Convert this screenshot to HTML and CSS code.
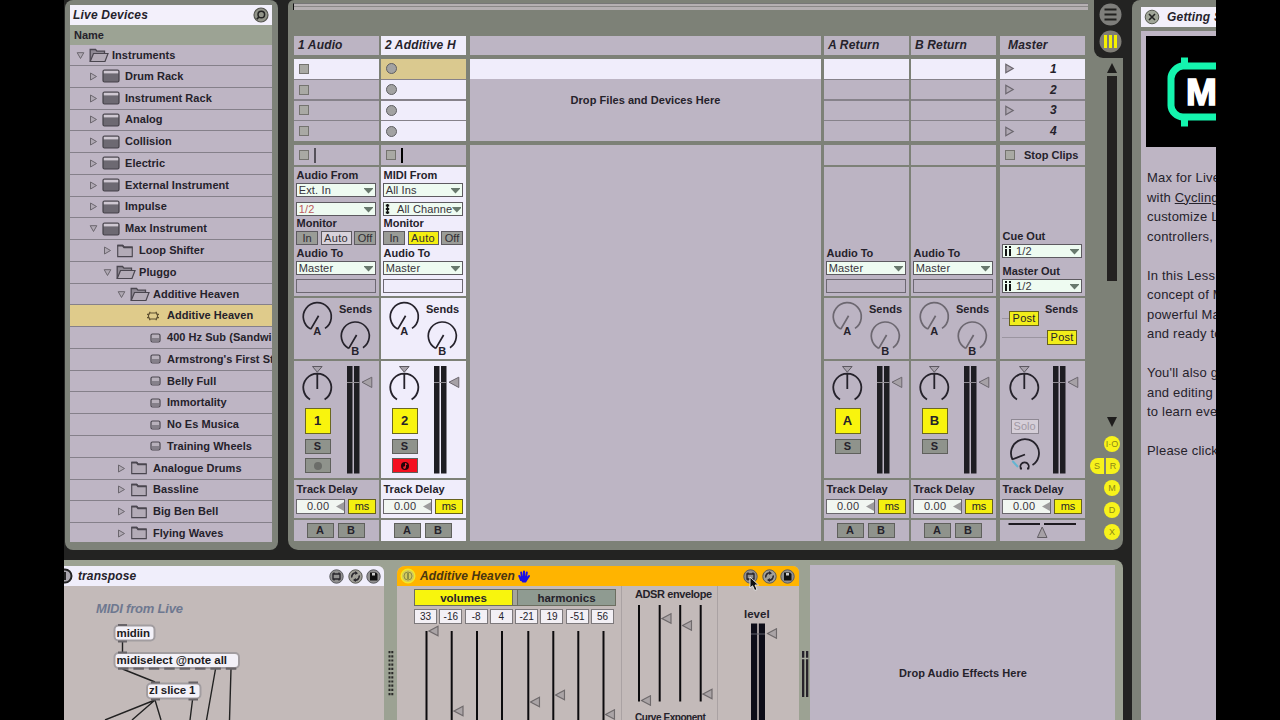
FILE: index.html
```html
<!DOCTYPE html>
<html lang="en">
<head>
<meta charset="utf-8">
<title>Live Set</title>
<link rel="stylesheet" href="styles.css">
</head>
<body>
<svg class="defs" width="0" height="0">
  <symbol id="right" viewBox="0 0 8 9"><path d="M1 1L7 4.5L1 8Z" fill="#b0a9b4" stroke="#6b666e"/></symbol>
  <symbol id="down" viewBox="0 0 9 8"><path d="M1.2 1.2H7.8L4.5 7Z" fill="#b0a9b4" stroke="#6b666e"/></symbol>
  <symbol id="folder" viewBox="0 0 18 15"><path d="M1.2 13.5V1.5H6.5L8 3.2H16.8V13.5Z" fill="#b3abb7" stroke="#4a464f" stroke-width="1.2"/><path d="M1 1.8H6.5L8 3.6H17" fill="none" stroke="#4a464f" stroke-width="1.8"/></symbol>
  <symbol id="open" viewBox="0 0 20 15"><path d="M1.2 13.5V1.5H6.5L8 3.2H15.5V5.5" fill="#8f8994" stroke="#4a464f" stroke-width="1.3"/><path d="M1.2 13.5L4.5 5.5H19L16 13.5Z" fill="#b3abb7" stroke="#4a464f" stroke-width="1.2"/></symbol>
  <symbol id="device" viewBox="0 0 18 14"><rect x="1" y="1" width="16" height="12" rx="1.5" fill="#6d6972" stroke="#444148" stroke-width="1.2"/><rect x="1.8" y="1.8" width="14.4" height="2.6" fill="#cfc8d2"/></symbol>
  <symbol id="preset" viewBox="0 0 11 10"><rect x="1" y="1" width="9" height="8" rx="1.5" fill="#b8b1bc" stroke="#4a464f" stroke-width="1.2"/><rect x="2" y="5" width="7" height="3" fill="#85808a"/></symbol>
  <symbol id="maxdev" viewBox="0 0 14 10"><path d="M3.500 2H10.500L11 3.300H13M13 6.700H11L10.500 8H3.500L3 6.700H1M1 3.300H3L3.500 2M2.500 3.300V6.700M11.500 3.300V6.700M3.800 .8V2M10.200 .8V2M3.800 8V9.200M10.200 8V9.200" fill="none" stroke="#5f5030" stroke-width="1.200"/></symbol>
  <symbol id="knobs" viewBox="0 0 85 61"><g fill="none" stroke="currentColor" stroke-width="1.700"><path d="M16.800 31.100A14 14 0 1 1 31 30.400M24.600 17.700L16.800 31.100"/><path d="M54.800 50.400A14 14 0 1 1 69 49.700M62.600 37L54.800 50.400"/></g></symbol>
  <symbol id="pan" viewBox="0 0 48 47"><path d="M18.500 5.500H28.100L23.300 11.200Z" fill="#a9a3ad" stroke="#5c5860"/><path d="M16 38.500A14 14 0 1 1 30.600 38.500M23.300 12.500V28" fill="none" stroke="#25222b" stroke-width="1.8"/></symbol>
  <symbol id="meter" viewBox="0 0 37 117"><path d="M5 5H10.500V112.500H5ZM12 5H17.500V112.500H12Z" fill="#1e1d22"/><path d="M5 21.500H17.500" stroke="#8e8a90"/><path d="M20 21.200L29.800 16.200V26.500Z" fill="#a6a1a6" stroke="#6b666e"/></symbol>
  <symbol id="fader" viewBox="0 0 11 12"><path d="M1 6L10 1.300V10.700Z" fill="#aaa4a6" stroke="#6f6a6c" stroke-width="1.200"/></symbol>
  <symbol id="tmax" viewBox="0 0 15 15"><circle cx="7.500" cy="7.500" r="6.700" fill="#929191" stroke="#5a5a60"/><path d="M4 5H11V10H4ZM5 3.500V5M10 3.500V5M5 10V11.500M10 10V11.500" fill="none" stroke="#29262d" stroke-width="1.400"/></symbol>
  <symbol id="tswap" viewBox="0 0 15 15"><circle cx="7.500" cy="7.500" r="6.700" fill="#a09f98" stroke="#5a5a55"/><path d="M3.800 8.500A4 4 0 0 1 8 3.800M11.200 6.500A4 4 0 0 1 7 11.200" fill="none" stroke="#29262d" stroke-width="1.600"/><path d="M7.200 2L10 4.300L7.200 6ZM7.800 9L5 10.900L7.800 13Z" fill="#29262d"/></symbol>
  <symbol id="tsave" viewBox="0 0 15 15"><circle cx="7.500" cy="7.500" r="6.700" fill="#929191" stroke="#5a5a60"/><path d="M4 3.500H10L11.500 5V11.500H4Z" fill="#111"/><rect x="6" y="4" width="3" height="2.500" fill="#ccc"/></symbol>
</svg>
<div class="stage">
  <div class="upper">
    <aside class="browser">
      <div class="btitle"><span>Live Devices</span><svg width="16" height="16" viewBox="0 0 16 16"><circle cx="8" cy="8" r="7" fill="#929489" stroke="#55554f" stroke-width="1.200"/><circle cx="8.300" cy="7.500" r="3.300" fill="none" stroke="#222" stroke-width="1.500"/><path d="M6 10L3.800 12.200" stroke="#222" stroke-width="1.700"/></svg></div>
      <div class="bname">Name</div>
      <div class="list">
        <div class="row l0"><svg class="ar"><use href="#down"/></svg><svg class="ic op"><use href="#open"/></svg>Instruments</div>
        <div class="row l1"><svg class="ar"><use href="#right"/></svg><svg class="ic"><use href="#device"/></svg>Drum Rack</div>
        <div class="row l1"><svg class="ar"><use href="#right"/></svg><svg class="ic"><use href="#device"/></svg>Instrument Rack</div>
        <div class="row l1"><svg class="ar"><use href="#right"/></svg><svg class="ic"><use href="#device"/></svg>Analog</div>
        <div class="row l1"><svg class="ar"><use href="#right"/></svg><svg class="ic"><use href="#device"/></svg>Collision</div>
        <div class="row l1"><svg class="ar"><use href="#right"/></svg><svg class="ic"><use href="#device"/></svg>Electric</div>
        <div class="row l1"><svg class="ar"><use href="#right"/></svg><svg class="ic"><use href="#device"/></svg>External Instrument</div>
        <div class="row l1"><svg class="ar"><use href="#right"/></svg><svg class="ic"><use href="#device"/></svg>Impulse</div>
        <div class="row l1"><svg class="ar"><use href="#down"/></svg><svg class="ic"><use href="#device"/></svg>Max Instrument</div>
        <div class="row l2"><svg class="ar"><use href="#right"/></svg><svg class="ic"><use href="#folder"/></svg>Loop Shifter</div>
        <div class="row l2"><svg class="ar"><use href="#down"/></svg><svg class="ic op"><use href="#open"/></svg>Pluggo</div>
        <div class="row l3"><svg class="ar"><use href="#down"/></svg><svg class="ic op"><use href="#open"/></svg>Additive Heaven</div>
        <div class="row l4 sel"><svg class="mx"><use href="#maxdev"/></svg>Additive Heaven</div>
        <div class="row l4"><svg class="pr"><use href="#preset"/></svg>400 Hz Sub (Sandwi</div>
        <div class="row l4"><svg class="pr"><use href="#preset"/></svg>Armstrong's First St</div>
        <div class="row l4"><svg class="pr"><use href="#preset"/></svg>Belly Full</div>
        <div class="row l4"><svg class="pr"><use href="#preset"/></svg>Immortality</div>
        <div class="row l4"><svg class="pr"><use href="#preset"/></svg>No Es Musica</div>
        <div class="row l4"><svg class="pr"><use href="#preset"/></svg>Training Wheels</div>
        <div class="row l3"><svg class="ar"><use href="#right"/></svg><svg class="ic"><use href="#folder"/></svg>Analogue Drums</div>
        <div class="row l3"><svg class="ar"><use href="#right"/></svg><svg class="ic"><use href="#folder"/></svg>Bassline</div>
        <div class="row l3"><svg class="ar"><use href="#right"/></svg><svg class="ic"><use href="#folder"/></svg>Big Ben Bell</div>
        <div class="row l3"><svg class="ar"><use href="#right"/></svg><svg class="ic"><use href="#folder"/></svg>Flying Waves</div>
      </div>
    </aside>

    <main class="session">
      <div class="mixer">
        <div class="overview"></div>
        <div class="tracks">
          <section class="track">
            <div class="head">1 Audio</div>
            <div class="slots"><div class="on"><i class="sq"></i></div><div><i class="sq"></i></div><div><i class="sq"></i></div><div><i class="sq"></i></div></div>
            <div class="stop"><i class="sq"></i><b class="tick dim"></b></div>
            <div class="io"><label>Audio From</label><div class="select">Ext. In</div><div class="select red second">1/2</div><label class="mon">Monitor</label><div class="btns"><span>In</span><span class="lit">Auto</span><span>Off</span></div><label>Audio To</label><div class="select">Master</div><div class="blank"></div></div>
            <div class="sends"><svg width="85" height="61"><use href="#knobs"/><g class="kt"><text x="23.300" y="37">A</text><text x="61.300" y="56.500">B</text><text x="61.500" y="15">Sends</text></g></svg></div>
            <div class="mix"><div class="strip"><svg width="48" height="47"><use href="#pan"/></svg><div class="act">1</div><div class="solo">S</div><div class="solo rec"><i></i></div></div><svg width="37" height="117"><use href="#meter"/></svg></div>
            <div class="delay"><label>Track Delay</label><div><span class="num">0.00</span><span class="ms">ms</span></div></div>
            <div class="xf"><span>A</span><span>B</span></div>
          </section>
          <section class="track active">
            <div class="head">2 Additive H</div>
            <div class="slots"><div class="gold"><i class="ro"></i></div><div><i class="ro"></i></div><div><i class="ro"></i></div><div><i class="ro"></i></div></div>
            <div class="stop"><i class="sq"></i><b class="tick"></b></div>
            <div class="io"><label>MIDI From</label><div class="select">All Ins</div><div class="select second"><svg width="12" height="12" viewBox="0 0 12 12"><path d="M2.500 1V11" stroke="#111" stroke-width="1.400"/><path d="M.8 2.500H4.200M.8 6H4.200M.8 9.500H4.200" stroke="#111" stroke-width="2"/></svg>All Channe</div><label class="mon">Monitor</label><div class="btns"><span>In</span><span class="yel">Auto</span><span>Off</span></div><label>Audio To</label><div class="select">Master</div><div class="blank"></div></div>
            <div class="sends"><svg width="85" height="61"><use href="#knobs"/><g class="kt"><text x="23.300" y="37">A</text><text x="61.300" y="56.500">B</text><text x="61.500" y="15">Sends</text></g></svg></div>
            <div class="mix"><div class="strip"><svg width="48" height="47"><use href="#pan"/></svg><div class="act">2</div><div class="solo">S</div><div class="solo rec armed"><svg width="10" height="10" viewBox="0 0 10 10"><circle cx="5" cy="5" r="4" fill="#250408"/><path d="M5.500 2V6.500M5.500 2L7 4" stroke="#f02030" fill="none"/><circle cx="4.500" cy="6.600" r="1.300" fill="#f02030"/></svg></div></div><svg width="37" height="117"><use href="#meter"/></svg></div>
            <div class="delay"><label>Track Delay</label><div><span class="num">0.00</span><span class="ms">ms</span></div></div>
            <div class="xf"><span>A</span><span>B</span></div>
          </section>
          <section class="drop">
            <div class="head"></div>
            <div class="dropslots"><div class="on"></div><p>Drop Files and Devices Here</p></div>
            <div class="rest"></div>
          </section>
          <section class="track ret">
            <div class="head">A Return</div>
            <div class="slots"><div class="on"></div><div></div><div></div><div></div></div>
            <div class="stop"></div>
            <div class="io"><label>Audio To</label><div class="select">Master</div><div class="blank"></div></div>
            <div class="sends"><svg width="85" height="61"><use href="#knobs"/><g class="kt"><text x="23.300" y="37">A</text><text x="61.300" y="56.500">B</text><text x="61.500" y="15">Sends</text></g></svg></div>
            <div class="mix"><div class="strip"><svg width="48" height="47"><use href="#pan"/></svg><div class="act">A</div><div class="solo">S</div></div><svg width="37" height="117"><use href="#meter"/></svg></div>
            <div class="delay"><label>Track Delay</label><div><span class="num">0.00</span><span class="ms">ms</span></div></div>
            <div class="xf"><span>A</span><span>B</span></div>
          </section>
          <section class="track ret">
            <div class="head">B Return</div>
            <div class="slots"><div class="on"></div><div></div><div></div><div></div></div>
            <div class="stop"></div>
            <div class="io"><label>Audio To</label><div class="select">Master</div><div class="blank"></div></div>
            <div class="sends"><svg width="85" height="61"><use href="#knobs"/><g class="kt"><text x="23.300" y="37">A</text><text x="61.300" y="56.500">B</text><text x="61.500" y="15">Sends</text></g></svg></div>
            <div class="mix"><div class="strip"><svg width="48" height="47"><use href="#pan"/></svg><div class="act">B</div><div class="solo">S</div></div><svg width="37" height="117"><use href="#meter"/></svg></div>
            <div class="delay"><label>Track Delay</label><div><span class="num">0.00</span><span class="ms">ms</span></div></div>
            <div class="xf"><span>A</span><span>B</span></div>
          </section>
          <section class="track master">
            <div class="head">Master</div>
            <div class="slots scenes"><div class="on"><svg width="11" height="11"><use href="#right"/></svg><em>1</em></div><div><svg width="11" height="11"><use href="#right"/></svg><em>2</em></div><div><svg width="11" height="11"><use href="#right"/></svg><em>3</em></div><div><svg width="11" height="11"><use href="#right"/></svg><em>4</em></div></div>
            <div class="stop"><i class="sq"></i><span>Stop Clips</span></div>
            <div class="io"><label>Cue Out</label><div class="select"><svg width="12" height="12" viewBox="0 0 12 12"><path d="M2 1V3M2 4V11M6 1V3M6 4V11" stroke="#111" stroke-width="2"/></svg>1/2</div><label class="mo">Master Out</label><div class="select"><svg width="12" height="12" viewBox="0 0 12 12"><path d="M2 1V3M2 4V11M6 1V3M6 4V11" stroke="#111" stroke-width="2"/></svg>1/2</div></div>
            <div class="sends posts"><div><hr><span class="post">Post</span><b>Sends</b></div><div><hr class="long"><span class="post">Post</span></div></div>
            <div class="mix"><div class="strip"><svg width="48" height="47"><use href="#pan"/></svg><div class="solobox">Solo</div><svg width="48" height="38" viewBox="0 0 48 38"><path d="M11.500 24.500A14 14 0 1 1 31.500 30M11 24.500L24 19.500" fill="none" stroke="#25222b" stroke-width="1.800"/><path d="M11.500 26L17 32" stroke="#63b5d2" stroke-width="2"/><path d="M21 33.500H19.700A4.300 4.300 0 1 1 27.500 33.500H26" fill="none" stroke="#25222b" stroke-width="1.800"/></svg></div><svg width="37" height="117"><use href="#meter"/></svg></div>
            <div class="delay"><label>Track Delay</label><div><span class="num">0.00</span><span class="ms">ms</span></div></div>
            <div class="xf"><svg width="85" height="21" viewBox="0 0 85 21"><path d="M8.500 4H40M44 4H76" stroke="#1d1b20" stroke-width="2"/><path d="M42.200 7L47 17.500H37.400Z" fill="#a6a1a6" stroke="#615d63"/></svg></div>
          </section>
        </div>
      </div>
      <div class="rail">
        <div class="notch">
          <svg width="23" height="23" viewBox="0 0 23 23"><circle cx="11.500" cy="11.500" r="11" fill="#7e7e7b"/><path d="M5.500 6.500H17.500M5.500 11.500H17.500M5.500 16.500H17.500" stroke="#20201f" stroke-width="2.200"/></svg>
          <svg width="23" height="23" viewBox="0 0 23 23"><circle cx="11.500" cy="11.500" r="11" fill="#7f7d76"/><path d="M6.500 5V18M11.500 5V18M16.500 5V18" stroke="#f5f000" stroke-width="3"/></svg>
        </div>
        <svg class="up" width="12" height="12" viewBox="0 0 12 12"><path d="M6 0L11 10H1Z" fill="#1e1d1c"/></svg>
        <div class="bar"></div>
        <svg class="dn" width="12" height="11" viewBox="0 0 12 11"><path d="M6 10L11 0H1Z" fill="#1e1d1c"/></svg>
        <div class="pills">
          <div><span>I·O</span></div><div><span class="lf">S</span><span class="rt">R</span></div><div><span>M</span></div><div><span>D</span></div><div><span>X</span></div>
        </div>
      </div>
    </main>
  </div>

  <div class="devices">
    <section class="dev transpose">
      <div class="dtitle"><svg width="9" height="16" viewBox="7 0 9 16"><circle cx="8" cy="8" r="6.500" fill="#aaa6ae" stroke="#222" stroke-width="2"/><path d="M8 4V12" stroke="#222" stroke-width="2"/></svg><span>transpose</span><div class="tools"><svg><use href="#tmax"/></svg><svg><use href="#tswap"/></svg><svg><use href="#tsave"/></svg></div></div>
      <svg class="patch" width="320" height="134" viewBox="64 586 320 134">
        <text class="note" x="96" y="613" textLength="87">MIDI from Live</text>
        <g stroke="#222" stroke-width="1.400"><path d="M122.500 642V652M122.500 669L155 682M215.500 669L206.500 720M231 669L229.500 720M155 700L105 720M155 700L132 720M155 700L161 720M192.500 700L190 720"/></g>
        <g fill="#f3f1f8" stroke="#a29da0" stroke-width="2"><rect x="114.500" y="625.500" width="40" height="15" rx="4"/><rect x="114.500" y="653" width="124.500" height="15" rx="4"/><rect x="147" y="683.500" width="53.500" height="15" rx="4"/></g>
        <path d="M118 625H127M118 641.500H127M118 652.500H127M151 682.500H160M188.500 682.500H198M151 699.500H160M188.500 699.500H198" stroke="#686468" stroke-width="2.200"/>
        <path d="M118 668.700H240" stroke="#686468" stroke-width="2.200" stroke-dasharray="10.500 4.900"/>
        <g class="obj"><text x="116.500" y="636.500" textLength="33.500">midiin</text><text x="116.500" y="664" textLength="110.500">midiselect @note all</text><text x="149" y="694.300" textLength="46.500">zl slice 1</text></g>
      </svg>
    </section>
    <svg class="dots" width="13" height="160" viewBox="384 560 13 160"><path d="M389.500 651V697M392.300 651V697" stroke="#2a2a28" stroke-width="2" stroke-dasharray="2.200 2"/></svg>
    <section class="dev heaven">
      <div class="dtitle"><svg width="16" height="16" viewBox="0 0 16 16"><circle cx="8" cy="8" r="6.800" fill="#d2ca5c" stroke="#f3e829" stroke-width="1.400"/><circle cx="8" cy="8" r="4" fill="none" stroke="#8d8e46"/><path d="M8 5V11" stroke="#8d8e46" stroke-width="2"/></svg><span>Additive Heaven</span><svg class="hand" width="12" height="13" viewBox="0 0 12 13"><path d="M3 10L1.300 6M4 7L3.200 2.500M6 7V1.500M8 7L8.800 2.500M9 9L11 6" stroke="#1b10e8" stroke-width="2" stroke-linecap="round"/><path d="M2.800 6H9.500V10L8 12.500H4.500L2.500 10Z" fill="#1b10e8"/></svg><div class="tools"><svg><use href="#tmax"/></svg><svg><use href="#tswap"/></svg><svg><use href="#tsave"/></svg></div></div>
      <div class="hbody">
        <div class="osc">
          <div class="tabs"><span class="cur">volumes</span><span>harmonics</span></div>
          <div class="vals"><span>33</span><span>-16</span><span>-8</span><span>4</span><span>-21</span><span>19</span><span>-51</span><span>56</span></div>
          <svg width="224" height="96" viewBox="397 624 224 96"><path d="M426.500 631V720M451.700 631V720M477 631V720M502 631V720M528.300 631V720M553.300 631V720M578.300 631V720M603.500 631V720" stroke="#0c0b0d" stroke-width="2"/><use href="#fader" x="428" y="625" width="11" height="12"/><use href="#fader" x="453" y="705" width="11" height="12"/><use href="#fader" x="529.500" y="696" width="11" height="12"/><use href="#fader" x="554.500" y="689" width="11" height="12"/><use href="#fader" x="604.500" y="708.500" width="11" height="12"/></svg>
        </div>
        <div class="adsr">
          <h4>ADSR envelope</h4>
          <svg width="95" height="110" viewBox="622 603 95 110"><path d="M639 605V701.500M659.700 605V701.500M680.200 605V701.500M700.700 605V701.500" stroke="#0c0b0d" stroke-width="2"/><use href="#fader" x="640.500" y="694.500" width="11" height="12"/><use href="#fader" x="661" y="612.500" width="11" height="12"/><use href="#fader" x="681.500" y="619.500" width="11" height="12"/><use href="#fader" x="702" y="688" width="11" height="12"/></svg>
          <h5>Curve Exponent</h5>
        </div>
        <div class="level">
          <h4>level</h4>
          <svg width="80" height="97" viewBox="718 623 80 97"><path d="M751 623.500H757.200V720H751ZM758.800 623.500H765V720H758.800Z" fill="#0d0d18"/><path d="M751 634H765" stroke="#5f5f69"/><use href="#fader" x="766.500" y="627.500" width="11" height="12"/></svg>
        </div>
      </div>
      <svg class="cursor" width="12" height="17" viewBox="0 0 12 17"><path d="M1 1V12L3.600 9.800L5.700 14.500L8 13.500L6 9H9.500Z" fill="#111" stroke="#eee" stroke-width=".9"/></svg>
    </section>
    <svg class="mini" width="11" height="160" viewBox="799 560 11 160"><path d="M802 651H804.300V697H802ZM806 651H808.300V697H806Z" fill="#26222a"/><path d="M801.500 658.500H808.500" stroke="#a9aca0" stroke-width="1.500"/></svg>
    <div class="dropfx">Drop Audio Effects Here</div>
  </div>

  <aside class="help">
    <div class="htitle"><svg width="16" height="16" viewBox="0 0 16 16"><circle cx="8" cy="8" r="6.800" fill="#a0a598" stroke="#55594f"/><path d="M5 5L11 11M11 5L5 11" stroke="#222" stroke-width="1.600"/></svg><span>Getting S</span></div>
    <div class="hcontent">
      <svg class="logo" width="90" height="111" viewBox="1146 35.500 90 111"><rect x="1146" y="35.500" width="90" height="111" fill="#000"/><path d="M1240 65.500H1183C1177 65.500 1171 72 1171 78V105C1171 111 1177 116.500 1183 116.500H1240" fill="none" stroke="#14f5ae" stroke-width="7"/><path d="M1184.500 57V65M1184.500 117V126" stroke="#14f5ae" stroke-width="7"/><text x="1186" y="104.500" font-family="Liberation Sans" font-weight="700" font-size="37" fill="#fff" stroke="#fff" stroke-width="1.600">M</text></svg>
      <p>Max for Live<br>with <u>Cycling</u><br>customize L<br>controllers,</p>
      <p>In this Less<br>concept of M<br>powerful Ma<br>and ready to</p>
      <p>You'll also g<br>and editing<br>to learn eve</p>
      <p>Please click</p>
    </div>
  </aside>
</div>
</body>
</html>
```
FILE: styles.css
```css
* { box-sizing: border-box; }
body { margin: 0; background: #000; width: 1280px; height: 720px; overflow: hidden; font: 700 11px/1 "Liberation Sans", Arial, sans-serif; color: #25222b; }
svg { display: block; flex: none; }
i, em { font-style: normal; }
.defs { position: absolute; }
.stage { width: 1152px; height: 720px; margin-left: 64px; background: #232322; overflow: hidden; display: grid; grid-template-columns: 1059px 84px; column-gap: 9px; grid-template-rows: 560px 160px; }
.upper { display: flex; height: 550px; padding-left: 1px; gap: 10px; }

/* device browser */
.browser { width: 213px; background: #7e8279; border-radius: 8px; padding: 5px 6px 8px 5px; }
.btitle { height: 20px; background: #f3f0fb; display: flex; align-items: center; justify-content: space-between; padding: 0 3px; font-style: italic; font-size: 12px; letter-spacing: .2px; }
.bname { height: 20px; background: #9ca394; padding: 5px 4px; }
.list { height: 497px; overflow: hidden; background: #beb5c4; }
.row { height: 21.77px; display: flex; align-items: center; border-bottom: 1.3px solid #85808a; white-space: nowrap; overflow: hidden; letter-spacing: .04px; }
.row.sel { background: #dfcb8b; }
.l0 { padding-left: 6px; height: 21px; }
.l1 { padding-left: 19px; }
.l2 { padding-left: 33px; }
.l3 { padding-left: 47px; }
.l4 { padding-left: 80px; }
.ar { width: 9px; height: 9px; margin-right: 4px; }
.ic { width: 18px; height: 14px; margin-right: 5px; }
.ic.op { width: 20px; height: 15px; margin-right: 3px; }
.pr { width: 11px; height: 10px; margin-right: 6px; }
.mx { width: 14px; height: 10px; margin: 0 7px 0 -4px; }

/* session */
.session { width: 835px; background: #7d8177; border-radius: 6px 0 10px 10px; display: flex; }
.mixer { width: 800px; padding: 3px 0 0 6px; }
.overview { height: 7px; margin: 0 0 26px -1px; border-left: 1px solid #111; border-top: 1px solid #777; background: linear-gradient(#b5b0b2 0 2px, #8a8887 2px 3px, #b5b0b2 3px); }
.tracks { display: flex; }
.track { width: 85px; display: flex; flex-direction: column; gap: 2px; margin-right: 2px; --bg: #bcb4c3; }
.track:nth-child(2) { margin-right: 4px; }
.track:nth-child(5) { margin-right: 4px; }
.active { --bg: #f0edfb; }
.track > div { background: var(--bg); }
.head { height: 19px; margin-bottom: 2px; padding: 3px 4px; font-size: 12px; font-style: italic; letter-spacing: .15px; background: var(--bg); white-space: nowrap; }
.master .head { padding-left: 8px; }
.track > .slots { height: 82px; margin-bottom: 2px; display: grid; grid-template-rows: repeat(4, 1fr); gap: 1.200px; background: #86828a; }
.slots > div { background: var(--bg); display: flex; align-items: center; padding-left: 5px; }
.slots > .on, .on { background: #f0edfb; }
.slots > .gold { background: #dac98f; }
.sq { width: 10px; height: 10px; border: 1px solid #74736f; background: #a9a9a4; }
.ro { width: 11px; height: 11px; border: 1.200px solid #5f5f62; border-radius: 50%; background: #a2a2a2; }
.scenes > div { padding-left: 4px; gap: 34px; }
.scenes em { font-style: italic; font-size: 12px; width: 10px; margin-left: 1px; }
.track > .stop { height: 20px; display: flex; align-items: center; padding-left: 5px; background: #bcb4c3; }
.stop span { margin-left: 9px; }
.tick { width: 1.500px; height: 15px; background: #000; margin-left: 5px; }
.dim { background: #55515a; }
.io { height: 129px; padding: 0 2px 0 2px; }
.ret .io { padding-top: 78px; }
.master .io { padding-top: 61px; }
label { display: block; height: 16px; padding: 3px 0 0 .500px; white-space: nowrap; }
.mon { height: 15px; padding-top: 2px; }
.mo { height: 21px; padding-top: 8px; }
.select { width: 80px; height: 14px; border: 1px solid #5d5a60; background: #eefbf1; font-weight: 400; font-size: 11px; letter-spacing: .15px; display: flex; align-items: center; padding-left: 1.700px; white-space: nowrap; color: #37333b; }
.select svg { margin-left: -.7px; }
.select::after { content: ""; margin: 1px 2px 0 auto; width: 9px; height: 6px; background: #68796d; clip-path: polygon(0 0, 100% 0, 100% 20%, 50% 100%, 0 20%); flex: none; }
.red { color: #bd5960; }
.second { margin-top: 5px; }
.second svg + * { margin: 0; }
.blank { width: 80px; height: 14px; margin-top: 4px; border: 1px solid #6d6872; }
.btns { width: 80px; display: flex; justify-content: space-between; }
.btns span { height: 14px; width: 22px; border: 1px solid #5d5a60; background: #9a9c97; font-weight: 400; text-align: center; line-height: 12px; color: #302c33; }
.btns span:nth-child(2) { width: 31px; letter-spacing: .3px; }
.btns .lit { background: #d8d3db; }
.btns .yel { background: #f4ef10; }
.sends { height: 61px; color: #25222b; }
.kt text { font: 700 11px "Liberation Sans", Arial, sans-serif; fill: #25222b; text-anchor: middle; }
.ret .sends { color: #6c6770; }
.posts { padding-top: 13px; }
.posts > div { display: flex; align-items: center; height: 14px; padding-left: 2px; }
.posts > div + div { margin-top: 5px; }
.posts hr { width: 7px; margin: 0; border: 0; border-top: 1px solid #9b95a0; }
.posts .long { width: 45px; }
.post { width: 30px; height: 15px; border: 1px solid #66611b; background: #f2ee1a; font-weight: 400; text-align: center; line-height: 13px; letter-spacing: .2px; }
.posts b { margin: -17px 0 0 6px; }
.mix { height: 117px; display: flex; }
.strip { width: 48px; }
.act { width: 26px; height: 26px; margin-left: 10.500px; background: #f9f40d; border: 1px solid #6b6820; text-align: center; font-size: 13px; line-height: 24px; }
.solo { width: 26px; height: 15px; margin: 5px 0 0 10.500px; border: 1px solid #5f605c; background: #8f938c; text-align: center; font-size: 11px; line-height: 13px; display: flex; align-items: center; justify-content: center; }
.rec { margin-top: 4px; }
.rec i { width: 8px; height: 8px; border-radius: 50%; background: #6b6d69; }
.armed { background: #f4101f; }
.solobox { width: 28px; height: 15px; margin: 11px 0 1px 10px; border: 1px solid #8e8893; background: #d5ced8; color: #a098a4; font-weight: 400; font-size: 11px; line-height: 13px; text-align: center; }
.master .strip { padding-left: .6px; }
.delay { height: 38px; padding: 1px 2px; }
.delay label { height: 18px; }
.delay > div { display: flex; justify-content: space-between; width: 80px; }
.num { width: 49px; height: 15px; border: 1px solid #6a676d; background: #f1f6f1; font-weight: 400; font-size: 11px; letter-spacing: .2px; line-height: 13px; padding-left: 10px; display: flex; color: #37333b; }
.num::after { content: ""; width: 8px; height: 9px; margin: 2px 0 0 auto; background: #9d9c9d; clip-path: polygon(0 50%, 100% 0, 100% 100%); }
.ms { width: 28px; height: 15px; border: 1px solid #66611b; background: #f4ef10; font-weight: 400; text-align: center; line-height: 13px; }
.xf { height: 21px; display: flex; }
.xf span { width: 27px; height: 15px; margin: 3px 0 0 4px; border: 1px solid #5f605c; background: #8f938c; text-align: center; line-height: 13px; }
.xf span:first-child { margin-left: 12.500px; }
.drop { width: 351px; margin-right: 3px; --bg: #bdb5c4; }
.drop .head { margin-bottom: 4px; }
.dropslots { height: 82px; background: var(--bg); margin-bottom: 4px; }
.dropslots .on { height: 20px; }
.dropslots p { margin: 16px 0 0; text-align: center; letter-spacing: .05px; }
.rest { height: 396px; background: var(--bg); }

.rail { width: 35px; display: flex; flex-direction: column; align-items: flex-end; }
.notch { width: 29px; height: 58px; background: #232322; border-radius: 0 0 0 9px; padding: 3px 0 0 5px; display: flex; flex-direction: column; gap: 4px; }
.up { margin: 5px 5px 0 0; }
.bar { width: 10px; height: 205px; margin: 1px 6px 0 0; background: #232120; }
.dn { margin: 136px 5px 0 0; }
.pills { margin: 8px 3px 0 0; display: flex; flex-direction: column; align-items: flex-end; gap: 5.900px; }
.pills div { display: flex; gap: 2px; }
.pills span { width: 16px; height: 16px; border-radius: 8px; background: #f7f21b; color: #8d8914; font-weight: 400; font-size: 9px; line-height: 16px; text-align: center; }
.pills .lf { width: 14px; border-radius: 8px 0 0 8px; }
.pills .rt { width: 14px; border-radius: 0 8px 8px 0; }

/* device chain */
.devices { grid-row: 2; height: 160px; background: #9ca293; border-radius: 0 8px 0 0; display: flex; }
.dev { margin-top: 6px; height: 154px; background: #c3bab9; overflow: hidden; }
.transpose { width: 320px; border-radius: 0 6px 0 0; }
.dtitle { height: 20px; display: flex; align-items: center; background: #f0eefb; font-size: 12px; font-style: italic; letter-spacing: .1px; }
.transpose .dtitle span { margin-left: 5px; }
.tools { margin-left: auto; display: flex; gap: 3.500px; padding-right: 3px; }
.tools svg { width: 15px; height: 15px; }
.note { font: italic 700 13px "Liberation Sans"; fill: #6e7890; }
.obj { font: 700 11.500px "Liberation Sans"; fill: #1d1b22; }
.heaven { width: 402px; border-radius: 8px 6px 0 0; position: relative; }
.heaven .dtitle { background: #ffb400; padding-left: 3px; color: #4a3510; }
.heaven .dtitle span { margin-left: 4px; }
.hand { margin-left: 3px; }
.heaven .tools { padding-right: 4px; }
.hbody { display: flex; height: 134px; }
.osc { width: 225px; border-right: 1px solid #aaa2a3; padding-top: 3px; }
.tabs { margin-left: 17px; width: 202px; height: 17px; border: 1px solid #6c6e60; background: #a5a59c; display: flex; justify-content: space-between; }
.tabs span { width: 98px; height: 15px; text-align: center; font-size: 11.500px; line-height: 16px; background: #8f9b91; border-left: 1px solid #6c6e60; }
.tabs .cur { background: #f8f50d; border-left: 0; border-right: 1px solid #6c6e60; }
.vals { display: flex; gap: 2.300px; margin: 3px 0 0 17px; }
.vals span { width: 23px; height: 15px; border: 1px solid #7d797c; background: #f3f0f5; text-align: center; font-weight: 400; font-size: 10px; line-height: 14px; }
.adsr { width: 96px; border-right: 1px solid #aaa2a3; }
h4, h5 { margin: 0; font-size: 11px; white-space: nowrap; }
.adsr h4 { padding: 3px 0 3px 13px; letter-spacing: -.4px; }
.adsr h5 { padding-left: 13px; font-size: 10px; line-height: 10px; letter-spacing: -.45px; }
.level { width: 80px; }
.level h4 { font-size: 11.500px; padding: 23px 0 2px 26px; height: 37px; }
.cursor { position: absolute; left: 352px; top: 10px; }
.dropfx { width: 305px; height: 155px; margin-top: 5px; background: #bdb5c4; text-align: center; padding: 103px 0 0 1px; letter-spacing: .05px; }

/* help view */
.help { grid-column: 2; grid-row: 1 / 3; background: #7e8279; border-radius: 8px 0 0 0; padding: 7px 0 0 9px; overflow: hidden; white-space: nowrap; }
.htitle { height: 20px; background: #f3f0fb; display: flex; align-items: center; gap: 7px; padding-left: 3px; font-size: 12px; font-style: italic; letter-spacing: .2px; }
.hcontent { margin-top: 4px; height: 689px; background: #beb5c4; padding: 4.500px 0 0 5px; font: 400 13px/19.500px "Liberation Sans", Arial, sans-serif; letter-spacing: .2px; }
.hcontent p { margin: 0 0 19.500px 1px; }
.logo { margin-bottom: 21.500px; }
```
